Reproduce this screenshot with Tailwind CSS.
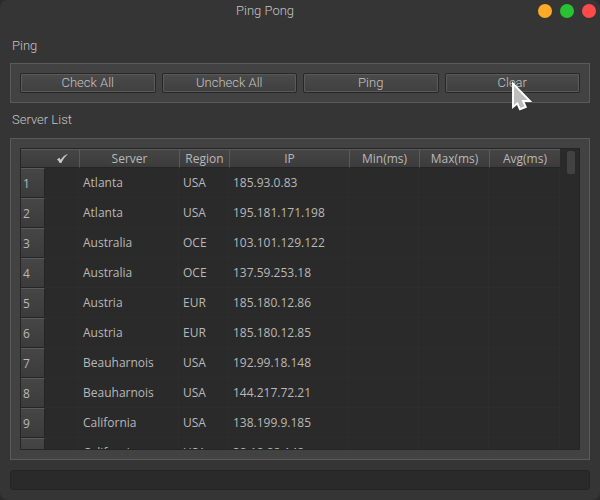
<!DOCTYPE html>
<html lang="en">
<head>
<meta charset="utf-8">
<meta name="viewport" content="width=device-width, initial-scale=1">
<title>Ping Pong</title>
<script src="https://cdn.jsdelivr.net/npm/@tailwindcss/browser@4"></script>
</head>
<body class="bg-[#2b2b2b]">
<main class="relative flex h-screen flex-col overflow-hidden rounded-lg bg-[#353535] px-[10px] pb-[10px] font-['Roboto',sans-serif] text-[13px] leading-4 font-light text-[#c4c4c4]">
  <header class="grid h-[22px] shrink-0 grid-cols-[1fr_auto_1fr] items-center">
    <h1 class="col-start-2 -ml-[64px]">Ping Pong</h1>
    <div class="-mr-1.5 flex justify-end gap-2">
      <button type="button" aria-label="Minimize" class="size-[14px] rounded-full bg-[#ffaa26]"></button>
      <button type="button" aria-label="Maximize" class="size-[14px] rounded-full bg-[#28c333]"></button>
      <button type="button" aria-label="Close" class="size-[14px] rounded-full bg-[#ff4a4a]"></button>
    </div>
  </header>

  <section aria-labelledby="ping-label" class="shrink-0 pt-4">
    <h2 id="ping-label" class="mb-[9px] ml-[2px]">Ping</h2>
    <div class="grid grid-cols-4 gap-[6px] border border-[#5a5a5a] bg-[#424242] p-[9px]">
      <button type="button" class="h-5 rounded-[2px] border border-[#272727] bg-linear-to-b from-[#4b4b4b] to-[#3f3f3f] leading-4 inset-ring inset-ring-[#5a5a5a]">Check All</button>
      <button type="button" class="h-5 rounded-[2px] border border-[#272727] bg-linear-to-b from-[#4b4b4b] to-[#3f3f3f] leading-4 inset-ring inset-ring-[#5a5a5a]">Uncheck All</button>
      <button type="button" class="h-5 rounded-[2px] border border-[#272727] bg-linear-to-b from-[#4b4b4b] to-[#3f3f3f] leading-4 inset-ring inset-ring-[#5a5a5a]">Ping</button>
      <button type="button" class="h-5 rounded-[2px] border border-[#272727] bg-linear-to-b from-[#4b4b4b] to-[#3f3f3f] leading-4 inset-ring inset-ring-[#5a5a5a]">Clear</button>
    </div>
  </section>

  <section aria-labelledby="list-label" class="flex min-h-0 flex-1 flex-col pt-[9px]">
    <h2 id="list-label" class="mb-[10px] ml-[2px]">Server List</h2>
    <div class="flex min-h-0 flex-1 border border-[#5a5a5a] bg-[#424242] p-[9px]">
      <div class="flex min-w-0 flex-1 overflow-hidden border border-[#252525] bg-[#2a2a2a]">
        <div class="min-w-0 flex-1 overflow-hidden">
          <table class="w-full table-fixed border-separate border-spacing-0 font-['Open_Sans','Noto_Sans',sans-serif] text-[12px] font-normal text-[#b8b8b8]">
            <colgroup><col class="w-6"><col class="w-[34px]"><col class="w-[100px]"><col class="w-[50px]"><col class="w-[120px]"><col class="w-[70px]"><col class="w-[70px]"><col></colgroup>
            <thead>
              <tr class="h-[19px] bg-linear-to-b from-[#464646] to-[#3b3b3b] [&>th]:border-t [&>th]:border-b [&>th]:border-t-[#5a5a5a] [&>th]:border-b-[#252525] [&>th]:p-0 [&>th]:font-normal [&>th+th+th]:border-l [&>th+th+th]:border-l-[#5a5a5a]">
                <th></th>
                <th scope="col" aria-label="Selected"><svg class="mx-auto h-[9px] w-[11px]" viewBox="0 0 11 9" fill="#c8c8c8"><path d="M0 5.5 2.3 3.8 3.7 5.8C5.7 2.8 8 .8 11 0 8.200 2.600 6 5.400 4.300 9H2.600C2 7.500 1.300 6.300 0 5.500Z"/></svg></th>
                <th scope="col">Server</th><th scope="col">Region</th><th scope="col">IP</th><th scope="col">Min(ms)</th><th scope="col">Max(ms)</th><th scope="col">Avg(ms)</th>
              </tr>
            </thead>
            <tbody id="rows"></tbody>
          </table>
        </div>
        <div class="flex w-[19px] shrink-0 flex-col items-end pt-[2px] pr-1" aria-hidden="true">
          <div class="h-[23px] w-2 rounded-[2px] bg-[#424242]"></div>
        </div>
      </div>
    </div>
  </section>

  <input type="text" readonly aria-label="Status" class="mt-[10px] h-5 w-full shrink-0 rounded-[3px] border border-[#252525] bg-[#2a2a2a] px-1">

  <!-- Mouse pointer -->
  <svg class="pointer-events-none absolute top-[80px] left-[511px] h-[31px] w-[22px]" viewBox="0 0 22 31" fill="#bdbdbd" stroke="#fff" stroke-width="1.900" aria-hidden="true"><path d="M2 3.500V27L6.300 23.500 9 29.200 14.800 27 12 21H19Z"/></svg>
</main>
<script>
const servers = [
  ["Atlanta", "USA", "185.93.0.83"],
  ["Atlanta", "USA", "195.181.171.198"],
  ["Australia", "OCE", "103.101.129.122"],
  ["Australia", "OCE", "137.59.253.18"],
  ["Austria", "EUR", "185.180.12.86"],
  ["Austria", "EUR", "185.180.12.85"],
  ["Beauharnois", "USA", "192.99.18.148"],
  ["Beauharnois", "USA", "144.217.72.21"],
  ["California", "USA", "138.199.9.185"],
  ["California", "USA", "38.18.88.148"]
];
document.getElementById("rows").innerHTML = servers.map((s, i) => `
  <tr class="h-[30px] [&>td]:border-r [&>td]:border-b [&>td]:border-[#2d2d2d] [&>td]:pt-px [&>td]:pr-0 [&>td]:pb-0 [&>td]:pl-1">
    <th scope="row" class="border-t border-r border-b border-t-[#5a5a5a] border-r-[#252525] border-b-[#252525] bg-linear-to-b from-[#464646] to-[#3b3b3b] pt-[2px] pr-0 pb-0 pl-[2px] text-left font-normal">${i + 1}</th>
    <td></td>${s.map(v => `<td>${v}</td>`).join("")}<td></td><td></td><td></td>
  </tr>`).join("");
</script>
</body>
</html>
